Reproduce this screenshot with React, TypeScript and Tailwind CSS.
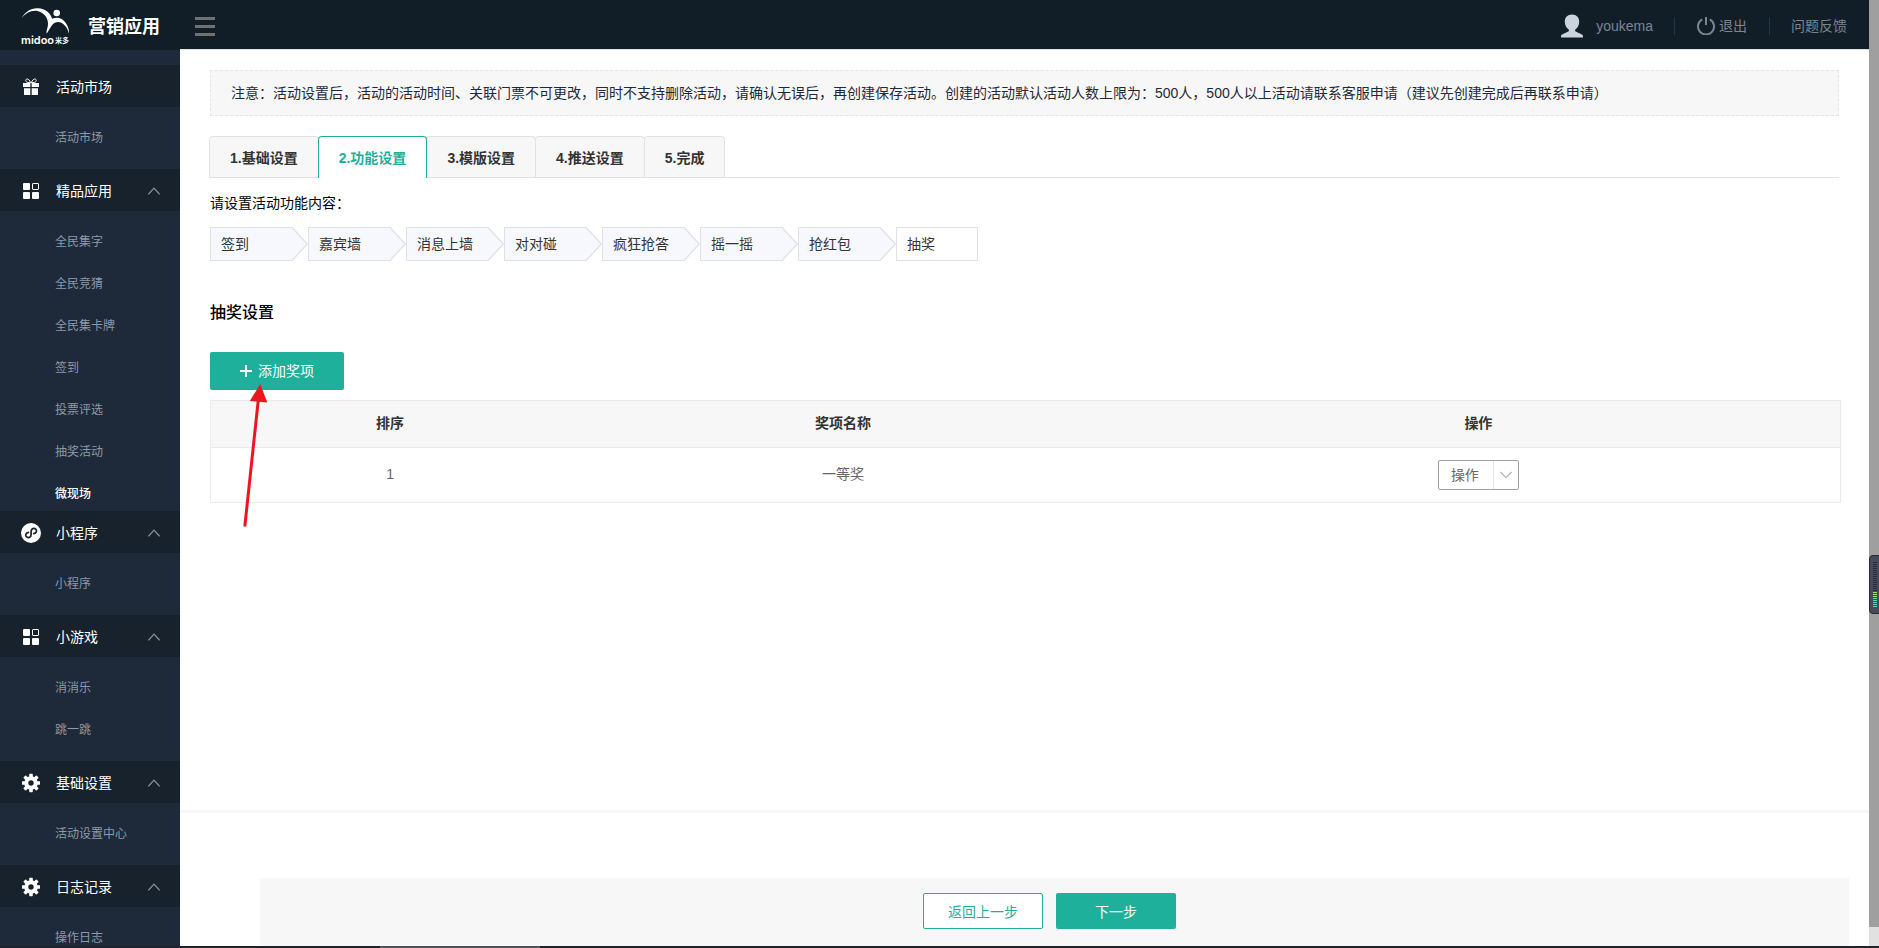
import type { ReactNode } from 'react';

type MenuGroup = {
  title: string;
  icon: ReactNode;
  items: string[];
  collapsible?: boolean;
  tight?: boolean;
};

const GiftIcon = () => (
  <svg width="16" height="18" viewBox="0 0 16 18" fill="#fff" aria-hidden="true">
    <path d="M0 5h7.300v4H0zM8.700 5H16v4H8.700zM1 10.200h6.300V17H1zM8.700 10.200H15V17H8.700z" />
    <path d="M7.600 4.800C6.800 2 5 .6 3.600 1.100 2 1.800 2.700 4.300 5 4.500zM8.400 4.800C9.200 2 11 .6 12.400 1.100 14 1.800 13.300 4.300 11 4.500z" fill="none" stroke="#fff" />
  </svg>
);

const GridIcon = () => (
  <svg width="16" height="16" viewBox="0 0 16 16" fill="#fff" aria-hidden="true">
    <rect width="7" height="7" rx="1" />
    <rect y="9" width="7" height="7" rx="1" />
    <rect x="9" y="9" width="7" height="7" rx="1" />
    <rect x="9.500" y=".5" width="6" height="6" rx=".5" fill="none" stroke="#fff" />
  </svg>
);

const MiniProgramIcon = () => (
  <svg width="20" height="20" viewBox="0 0 20 20" aria-hidden="true">
    <circle cx="10" cy="10" r="10" fill="#fff" />
    <path
      d="M12.800 10.700C15.300 10.200 16.200 8 14.900 6.400 13.200 4.600 10.100 5.600 10.100 8.300V11.700C10.100 14.400 7 15.400 5.300 13.700 4 12.100 4.900 9.900 7.400 9.400"
      fill="none"
      stroke="#17222c"
      strokeWidth="1.700"
      strokeLinecap="round"
    />
  </svg>
);

const GearIcon = () => (
  <svg width="18" height="20" viewBox="-9 -10 18 20" fill="#fff" aria-hidden="true">
    <circle r="6.800" />
    {[0, 45, 90, 135].map((angle) => (
      <rect key={angle} x="-1.800" y="-9.300" width="3.600" height="18.600" rx=".8" transform={`rotate(${angle})`} />
    ))}
    <circle r="2.700" fill="#17222c" />
  </svg>
);

const menu: MenuGroup[] = [
  { title: '活动市场', icon: <GiftIcon />, items: ['活动市场'] },
  {
    title: '精品应用',
    icon: <GridIcon />,
    items: ['全民集字', '全民竞猜', '全民集卡牌', '签到', '投票评选', '抽奖活动', '微现场'],
    collapsible: true,
    tight: true,
  },
  { title: '小程序', icon: <MiniProgramIcon />, items: ['小程序'], collapsible: true },
  { title: '小游戏', icon: <GridIcon />, items: ['消消乐', '跳一跳'], collapsible: true },
  { title: '基础设置', icon: <GearIcon />, items: ['活动设置中心'], collapsible: true },
  { title: '日志记录', icon: <GearIcon />, items: ['操作日志'], collapsible: true },
];

const tabs = ['1.基础设置', '2.功能设置', '3.模版设置', '4.推送设置', '5.完成'];
const steps = ['签到', '嘉宾墙', '消息上墙', '对对碰', '疯狂抢答', '摇一摇', '抢红包', '抽奖'];

const Logo = () => (
  <svg width="50" height="38" viewBox="0 0 50 38" fill="#fff" role="img" aria-label="midoo 米多">
    <path d="M.4 11.500C4 4.500 10 .8 17 1.200 24.500 1.600 29.500 6 31.200 11.800 36 9.500 41.500 11 44.800 16 47.200 19.600 48.300 23 48 26.800 46.800 22.500 45.500 19.600 42.500 17.200 38.500 14 34 14.500 31 18.200 29.200 20.500 27.500 23.800 25.800 26.500 24.800 24.500 27 21 27 16.500 27 10.500 22.500 5.300 16.500 4 10.500 2.900 4.500 6 .4 11.500Z" />
    <circle cx="35.700" cy="6" r="3.300" />
    <text x="0" y="36.500" fontSize="11" fontWeight="600" fontFamily="Inter, sans-serif">midoo</text>
    <text x="34" y="36" fontSize="7" fontWeight="700" fontFamily="Noto Sans CJK SC, sans-serif">米多</text>
  </svg>
);

const Header = () => (
  <header className="flex h-[49px] shrink-0 items-center bg-[#111e28] text-[#7b8690]">
    <div className="flex w-[180px] items-center pt-[2px] pl-[21px]">
      <Logo />
      <span className="ml-[17px] pt-[2px] text-lg leading-6 font-bold text-white">营销应用</span>
    </div>
    <button type="button" aria-label="菜单" className="ml-[15px] flex w-5 flex-col gap-[5px] pt-1">
      <span className="h-[3px] w-full bg-[#717171]" />
      <span className="h-[3px] w-full bg-[#717171]" />
      <span className="h-[3px] w-full bg-[#717171]" />
    </button>
    <div className="ml-auto flex items-center pt-[2px] pr-[22px] leading-[18px]">
      <a href="#" className="flex items-center">
        <svg width="22" height="24" viewBox="0 0 22 24" fill="#cbd3dc" aria-hidden="true">
          <path d="M11 .5C15.500.5 18.200 3.500 18.200 7.500 18.200 11.300 16.500 14.200 14.200 15.600V17.300L20.500 20.200C21.700 20.800 22 21.500 22 22.300V23.500H0V22.300C0 21.500.3 20.800 1.500 20.200L7.800 17.300V15.600C5.500 14.200 3.800 11.300 3.800 7.500 3.800 3.500 6.500.5 11 .5Z" />
        </svg>
        <span className="ml-[13px]">youkema</span>
      </a>
      <span className="ml-[21px] h-[18px] w-px bg-[#22364a]" />
      <a href="#" className="ml-[22px] flex items-center">
        <svg width="18" height="18" viewBox="0 0 18 18" fill="none" stroke="#7b8690" strokeWidth="2" aria-hidden="true">
          <path d="M5.200 2.400A8 8 0 1 0 12.800 2.400M9 0V8" />
        </svg>
        <span className="ml-1">退出</span>
      </a>
      <span className="ml-[22px] h-[18px] w-px bg-[#22364a]" />
      <a href="#" className="ml-[21px]">问题反馈</a>
    </div>
  </header>
);

const Sidebar = () => (
  <nav className="w-[180px] shrink-0 overflow-hidden border-t border-[#111e28] bg-[#1e2939] pt-[15px]">
    {menu.map((group) => (
      <section key={group.title}>
        <h2>
          <button type="button" className="flex h-[42px] w-full items-center bg-[#17222c] pt-px pr-5 text-white">
            <span className="ml-5 flex w-[22px] justify-center">{group.icon}</span>
            <span className="ml-[14px] leading-5">{group.title}</span>
            {group.collapsible && (
              <svg className="ml-auto" width="12" height="8" viewBox="0 0 12 8" fill="none" stroke="#8593a0" strokeWidth="1.200" aria-hidden="true">
                <path d="M.4 7.300 6 1.200 11.600 7.300" />
              </svg>
            )}
          </button>
        </h2>
        <ul className={group.tight ? 'pt-[10px] -mb-1' : 'py-[10px]'}>
          {group.items.map((item) => (
            <li key={item}>
              <a
                href="#"
                className={
                  item === '微现场'
                    ? 'block pl-[55px] text-xs leading-[42px] font-medium text-white'
                    : 'block pl-[55px] text-xs leading-[42px] text-[#8d99aa]'
                }
              >
                {item}
              </a>
            </li>
          ))}
        </ul>
      </section>
    ))}
  </nav>
);

const Tabs = () => (
  <div role="tablist" className="mt-5 -ml-px flex border-b border-[#e1e3e2] font-bold">
    {tabs.map((tab, i) => (
      <button
        key={tab}
        type="button"
        role="tab"
        aria-selected={i === 1}
        className={
          i === 1
            ? 'relative -mb-px -ml-px h-[42px] rounded-t-sm border border-b-0 border-[#1eb09a] bg-white px-5 text-[#1eb09a]'
            : 'h-[41px] rounded-t-sm border border-b-0 border-[#e1e3e2] bg-[#f7f7f7] px-5 pt-px text-[#333] not-first:-ml-px'
        }
      >
        {tab}
      </button>
    ))}
  </div>
);

const Steps = () => (
  <ol className="mt-[14px] flex text-[#333]">
    {steps.map((step, i) =>
      i < steps.length - 1 ? (
        <li key={step} className="flex">
          <span className="h-[34px] w-[82px] border border-r-0 border-[#dfe1e5] bg-[#f6f8fd] pl-[10px] leading-8">{step}</span>
          <svg width="16" height="34" viewBox="0 0 16 34" aria-hidden="true">
            <path d="M0 .5 15.300 17 0 33.500" fill="#f6f8fd" stroke="#dfe1e5" strokeWidth="1.300" />
          </svg>
        </li>
      ) : (
        <li key={step} className="h-[34px] w-[82px] border border-[#dfe1e5] pl-[10px] leading-8">{step}</li>
      )
    )}
  </ol>
);

const PrizeTable = () => (
  <table className="mt-[10px] -mr-[2px] w-[calc(100%+2px)] table-fixed border-collapse border border-[#ebebeb] text-center">
    <thead>
      <tr className="h-[47px] border-b border-[#ebebeb] bg-[#f7f7f7] text-[#333]">
        <th className="w-[22%] pb-[2px] font-bold">排序</th>
        <th className="w-[33.6%] pb-[2px] font-bold">奖项名称</th>
        <th className="pb-[2px] font-bold">操作</th>
      </tr>
    </thead>
    <tbody>
      <tr className="h-[55px] text-[#666]">
        <td className="pb-[2px]">1</td>
        <td className="pb-[2px]">一等奖</td>
        <td>
          <div className="relative mx-auto h-[30px] w-[81px]">
            <select aria-label="操作" className="size-full appearance-none rounded-xs border border-[#a0a0a0] bg-white pl-3 text-[#666]">
              <option>操作</option>
            </select>
            <span className="pointer-events-none absolute inset-y-px right-px flex w-[25px] items-center justify-center border-l border-[#e5e5e5]">
              <svg width="12" height="8" viewBox="0 0 12 8" fill="none" stroke="#b5b5b5" strokeWidth="1.300" aria-hidden="true">
                <path d="M.4 1 6 6.600 11.600 1" />
              </svg>
            </span>
          </div>
        </td>
      </tr>
    </tbody>
  </table>
);

const PointerArrow = () => (
  <svg className="pointer-events-none absolute top-8 left-7 z-10" width="34" height="144" viewBox="0 0 34 144" aria-hidden="true">
    <path d="M6.800 142.500 20.500 14" stroke="#ed1620" strokeWidth="3" />
    <path d="M22.300 0 11.800 17 29.300 18.500Z" fill="#ed1620" />
  </svg>
);

const ScrollTrack = () => (
  <div className="relative flex w-[10px] shrink-0 flex-col bg-[#e1e1e1]">
    <div className="mb-[19px] flex-1 bg-[#9f9f9f]" />
    <svg className="absolute top-[555px] left-0" width="10" height="59" viewBox="0 0 10 59" aria-hidden="true">
      <path d="M10 .5H4A3.500 3.500 0 0 0 .5 4V55A3.500 3.500 0 0 0 4 58.500H10" fill="#464b5b" stroke="#262935" />
      {Array.from({ length: 23 }, (_, i) => (
        <rect key={i} x="4" y={7 + i * 2} width="4" height="1" fill={i < 15 ? '#2b2e3a' : i < 18 ? '#9ee07c' : '#52d8b4'} />
      ))}
    </svg>
  </div>
);

const App = () => {
  return (
    <div className="flex h-screen flex-col overflow-hidden bg-white font-['Liberation_Sans','Noto_Sans_CJK_SC',sans-serif] text-sm">
      <div className="flex min-h-0 flex-1">
        <div className="flex min-w-0 flex-1 flex-col">
          <Header />
          <div className="flex min-h-0 flex-1">
            <Sidebar />
            <div className="flex min-w-0 flex-1 flex-col">
              <main className="flex-1 border-t border-b-3 border-t-[#dfe3e6] border-b-[#f7f7f7] px-[30px] pt-5">
                <p className="border border-dashed border-[#e4e4e4] bg-[#f7f7f7] px-5 leading-11 text-[#1e2939]">
                  注意：活动设置后，活动的活动时间、关联门票不可更改，同时不支持删除活动，请确认无误后，再创建保存活动。创建的活动默认活动人数上限为：500人，500人以上活动请联系客服申请（建议先创建完成后再联系申请）
                </p>
                <Tabs />
                <p className="mt-[15px] leading-5">请设置活动功能内容：</p>
                <Steps />
                <h1 className="mt-10 text-base leading-6 font-medium">抽奖设置</h1>
                <div className="relative mt-[27px]">
                  <button type="button" className="flex h-[38px] w-[134px] items-center rounded-xs bg-[#1eb09a] pl-[30px] text-white">
                    <svg width="12" height="12" viewBox="0 0 12 12" stroke="#fff" strokeWidth="2" aria-hidden="true">
                      <path d="M0 6H12M6 0V12" />
                    </svg>
                    <span className="ml-[6px]">添加奖项</span>
                  </button>
                  <PointerArrow />
                </div>
                <PrizeTable />
              </main>
              <footer className="mt-[65px] mr-5 ml-20 flex h-[68px] shrink-0 justify-center gap-[13px] bg-[#f7f7f7] pt-[15px] pr-[10px]">
                <button type="button" className="h-9 w-30 rounded-xs border border-[#1eb09a] bg-white pt-px text-[#1eb09a]">返回上一步</button>
                <button type="button" className="h-9 w-30 rounded-xs bg-[#1eb09a] pt-px text-white">下一步</button>
              </footer>
            </div>
          </div>
        </div>
        <ScrollTrack />
      </div>
      <div className="h-[2px] shrink-0 bg-[#20222c] pl-[380px]">
        <div className="h-full w-40 bg-[#50525c]" />
      </div>
    </div>
  );
};

export default App;
